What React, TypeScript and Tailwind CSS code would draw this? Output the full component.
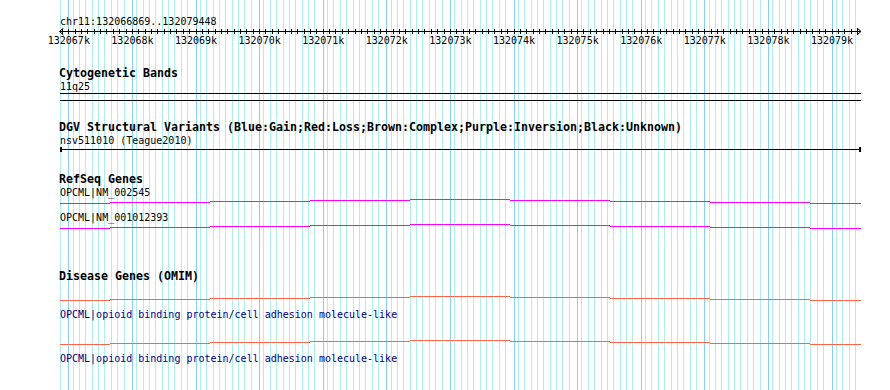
import React from "react";

// region shown in the panel
const START = 132066869;
const END = 132079448;
const X0 = 60;
const WIDTH = 800;
const pxPerBp = WIDTH / (END - START);

const xOf = (bp: number) => X0 + (bp - START) * pxPerBp;

const majors: number[] = [];
for (let k = 132067; k <= 132079; k++) majors.push(k * 1000);

// minor grid lines every 100bp (drawn a little left of the major phase)
const minorLines: number[] = [];
for (let k = 0; k <= 125; k++) {
  if (k % 10 === 1) continue;
  minorLines.push(Math.round(xOf(132066900 + k * 100) - 2));
}

const ticks: number[] = [];
for (let bp = 132066900; bp < END; bp += 100) ticks.push(Math.round(xOf(bp)));

// intron "hat" drawn as stepped 1px segments
const hatEdges = [60, 110, 210, 310, 410, 510, 610, 710, 810, 861];
const hatDy = [4, 3, 2, 1, 0, 1, 2, 3, 4];

const Hat: React.FC<{ color: string }> = ({ color }) => (
  <svg width={890} height={12} className="block">
    {hatDy.map((dy, i) => (
      <rect
        key={i}
        x={hatEdges[i]}
        y={dy}
        width={hatEdges[i + 1] - hatEdges[i]}
        height={1}
        fill={color}
      />
    ))}
  </svg>
);

const Grid: React.FC = () => (
  <svg width={890} height={390} className="absolute inset-0">
    {minorLines.map((x) => (
      <rect key={"m" + x} x={x} y={0} width={1} height={390} fill="#aeeeee" />
    ))}
    {majors.map((bp) => (
      <rect
        key={"M" + bp}
        x={Math.round(xOf(bp))}
        y={0}
        width={1}
        height={390}
        fill="#87cefa"
      />
    ))}
  </svg>
);

const TrackTitle: React.FC<{ children: React.ReactNode; className?: string }> = ({
  children,
  className,
}) => (
  <div
    className={
      "pl-[59px] h-[13px] leading-[13px] text-[11.63px] font-bold whitespace-nowrap text-black " +
      (className ?? "")
    }
  >
    {children}
  </div>
);

const SmallText: React.FC<{ children: React.ReactNode; className?: string }> = ({
  children,
  className,
}) => (
  <div
    className={
      "pl-[60px] h-[13px] leading-[13px] text-[10px] whitespace-nowrap " +
      (className ?? "text-black")
    }
  >
    {children}
  </div>
);

export default function App() {
  return (
    <div className="relative w-[890px] h-[390px] bg-white overflow-hidden font-['DejaVu_Sans_Mono',monospace]">
      <Grid />

      <div className="relative pt-[15px]">
        <SmallText>chr11:132066869..132079448</SmallText>

        {/* ruler */}
        <div className="relative h-[21px]">
          <svg width={890} height={8} className="block">
            <rect x={60} y={3} width={801} height={1} fill="#000" />
            {ticks.map((x) => (
              <rect key={x} x={x} y={1} width={1} height={5} fill="#000" />
            ))}
            <path d="M63.5 0 L59.5 3.5 L63.5 7" stroke="#000" fill="none" strokeWidth={1} />
            <path d="M857 0 L861 3.5 L857 7" stroke="#000" fill="none" strokeWidth={1} />
          </svg>
          {majors.map((bp) => (
            <span
              key={bp}
              className="absolute top-[6px] h-[13px] leading-[13px] text-[10px] text-black -translate-x-1/2"
              style={{ left: xOf(bp) + 0.5 }}
            >
              {bp / 1000}k
            </span>
          ))}
        </div>

        {/* Cytogenetic Bands */}
        <TrackTitle className="mt-[18px]">Cytogenetic Bands</TrackTitle>
        <SmallText>11q25</SmallText>
        <svg width={890} height={8} className="block">
          <rect x={60} y={0} width={801} height={1} fill="#000" />
          <rect x={60} y={7} width={801} height={1} fill="#000" />
        </svg>

        {/* DGV */}
        <TrackTitle className="mt-[20px]">
          DGV Structural Variants (Blue:Gain;Red:Loss;Brown:Complex;Purple:Inversion;Black:Unknown)
        </TrackTitle>
        <SmallText>nsv511010 (Teague2010)</SmallText>
        <svg width={890} height={6} className="block">
          <rect x={60} y={2} width={801} height={1} fill="#000" />
          <rect x={60} y={0} width={2} height={5} fill="#000" />
          <rect x={859} y={0} width={2} height={5} fill="#000" />
        </svg>

        {/* RefSeq */}
        <TrackTitle className="mt-[20px]">RefSeq Genes</TrackTitle>
        <SmallText>OPCML|NM_002545</SmallText>
        <Hat color="#ff00ff" />
        <SmallText>OPCML|NM_001012393</SmallText>
        <Hat color="#ff00ff" />

        {/* OMIM */}
        <TrackTitle className="mt-[34px]">Disease Genes (OMIM)</TrackTitle>
        <div className="mt-[13px]">
          <Hat color="#ff6347" />
        </div>
        <SmallText className="text-[#000080]">
          OPCML|opioid binding protein/cell adhesion molecule-like
        </SmallText>
        <div className="mt-[19px]">
          <Hat color="#ff6347" />
        </div>
        <SmallText className="text-[#000080]">
          OPCML|opioid binding protein/cell adhesion molecule-like
        </SmallText>
      </div>
    </div>
  );
}
